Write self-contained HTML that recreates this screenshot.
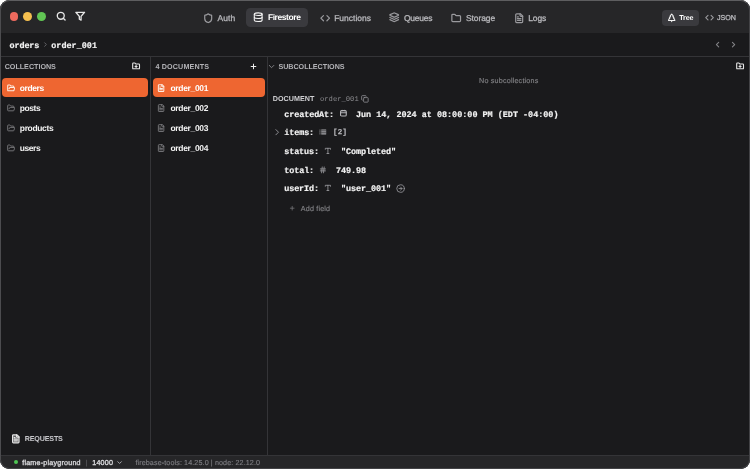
<!DOCTYPE html>
<html><head><meta charset="utf-8">
<style>
*{margin:0;padding:0;box-sizing:border-box}
html,body{width:750px;height:469px;overflow:hidden;background:#fff}
body{position:relative}
#win{position:absolute;left:0;top:0;width:750px;height:469px;background:#1a1a1c;border-radius:9.500px;overflow:hidden;will-change:transform}
#frame{position:absolute;left:0;top:0;width:750px;height:469px;border-style:solid;border-width:1px 1.300px 1.300px 0.700px;border-color:#5e5e60 #434346 #434346 #4c4c4f;border-radius:9.500px;z-index:10}
.abs{position:absolute}
.t{position:absolute;white-space:pre;line-height:1;text-rendering:geometricPrecision}
.s{font-family:"Liberation Sans",sans-serif}
.m{font-family:"Liberation Mono",monospace}
svg{position:absolute;overflow:visible;fill:none;stroke-linecap:round;stroke-linejoin:round}
.tabi{stroke:#9a9a9e;stroke-width:2.800}
.gi{stroke:#808084;stroke-width:2.500}
</style></head><body>
<div id="win">
  <!-- title bar -->
  <div class="abs" style="left:0;top:0;width:750px;height:33px;background:#262628"></div>
  <div class="abs" style="left:9.500px;top:12.200px;width:8.800px;height:8.800px;border-radius:50%;background:#ed6a5e"></div>
  <div class="abs" style="left:23px;top:12.100px;width:9px;height:9px;border-radius:50%;background:#f5bf4f"></div>
  <div class="abs" style="left:36.500px;top:12.100px;width:9px;height:9px;border-radius:50%;background:#61c554"></div>
  <svg style="left:55.500px;top:11px" width="10.400" height="10.400" viewBox="0 0 24 24" stroke="#e6e6e6" stroke-width="3.100"><circle cx="11" cy="11" r="8"/><path d="m21 21-4.300-4.300"/></svg>
  <svg style="left:74.700px;top:11.200px" width="10.400" height="10.400" viewBox="0 0 24 24" stroke="#e6e6e6" stroke-width="3.100"><polygon points="22 3 2 3 10 12.460 10 19 14 21 14 12.460 22 3"/></svg>

  <!-- tabs -->
  <svg class="tabi" style="left:202.800px;top:12.700px" width="10.400" height="10.400" viewBox="0 0 24 24"><path d="M20 13c0 5-3.500 7.500-7.660 8.950a1 1 0 0 1-.670-.010C7.500 20.500 4 18 4 13V6a1 1 0 0 1 1-1c2 0 4.500-1.200 6.240-2.720a1.170 1.170 0 0 1 1.520 0C14.510 3.810 17 5 19 5a1 1 0 0 1 1 1z"/></svg>
  <div class="abs" style="left:246.300px;top:8px;width:62px;height:19.300px;border-radius:4.500px;background:#3a3a3e"></div>
  <svg style="left:253px;top:12.400px" width="10.400" height="10.400" viewBox="0 0 24 24" stroke="#f4f4f4" stroke-width="2.500"><ellipse cx="12" cy="5" rx="9" ry="3"/><path d="M3 5V19A9 3 0 0 0 21 19V5"/><path d="M3 12A9 3 0 0 0 21 12"/></svg>
  <svg class="tabi" style="left:319.500px;top:12.600px" width="10.400" height="10.400" viewBox="0 0 24 24"><polyline points="16 18 22 12 16 6"/><polyline points="8 6 2 12 8 18"/></svg>
  <svg class="tabi" style="left:389.400px;top:12.400px" width="10.400" height="10.400" viewBox="0 0 24 24"><path d="m12.830 2.180a2 2 0 0 0-1.660 0L2.600 6.080a1 1 0 0 0 0 1.830l8.580 3.910a2 2 0 0 0 1.660 0l8.580-3.900a1 1 0 0 0 0-1.830Z"/><path d="m22 17.650-9.170 4.160a2 2 0 0 1-1.660 0L2 17.650"/><path d="m22 12.650-9.170 4.160a2 2 0 0 1-1.660 0L2 12.650"/></svg>
  <svg class="tabi" style="left:451.400px;top:12.500px" width="10.400" height="10.400" viewBox="0 0 24 24"><path d="M20 20a2 2 0 0 0 2-2V8a2 2 0 0 0-2-2h-7.900a2 2 0 0 1-1.690-.9L9.600 3.900A2 2 0 0 0 7.930 3H4a2 2 0 0 0-2 2v13a2 2 0 0 0 2 2Z"/></svg>
  <svg class="tabi" style="left:514px;top:12.500px" width="10.400" height="10.400" viewBox="0 0 24 24"><path d="M15 2H6a2 2 0 0 0-2 2v16a2 2 0 0 0 2 2h12a2 2 0 0 0 2-2V7Z"/><path d="M14 2v4a2 2 0 0 0 2 2h4"/><path d="M10 9H8"/><path d="M16 13H8"/><path d="M16 17H8"/></svg>

  <div class="abs" style="left:662.300px;top:9.600px;width:36.500px;height:16.500px;border-radius:4px;background:#3a3a3e"></div>
  <svg style="left:667.200px;top:13px" width="9.400" height="9.400" viewBox="0 0 24 24" stroke="#f4f4f4" stroke-width="2.700"><path d="m17 14 3 3.300a1 1 0 0 1-.7 1.700H4.700a1 1 0 0 1-.7-1.700L7 14h-.3a1 1 0 0 1-.7-1.700L9 9h-.2A1 1 0 0 1 8 7.300L12 3l4 4.300a1 1 0 0 1-.8 1.700H15l3 3.300a1 1 0 0 1-.7 1.700H17Z"/><path d="M12 22v-3"/></svg>
  <svg class="tabi" style="left:705.400px;top:13.100px" width="9.100" height="9.100" viewBox="0 0 24 24"><polyline points="16 18 22 12 16 6"/><polyline points="8 6 2 12 8 18"/></svg>

  <!-- breadcrumb -->
  <svg style="left:42px;top:41.300px" width="7" height="7" viewBox="0 0 24 24" stroke="#6c6c70" stroke-width="3"><path d="m9 18 6-6-6-6"/></svg>
  <svg style="left:712.700px;top:40.200px" width="9.100" height="9.100" viewBox="0 0 24 24" stroke="#848488" stroke-width="2.800"><path d="m15 18-6-6 6-6"/></svg>
  <svg style="left:728.800px;top:40.200px" width="9.100" height="9.100" viewBox="0 0 24 24" stroke="#848488" stroke-width="2.800"><path d="m9 18 6-6-6-6"/></svg>
  <div class="abs" style="left:0;top:56px;width:750px;height:1px;background:#343437"></div>

  <!-- column dividers -->
  <div class="abs" style="left:150px;top:57px;width:1px;height:399px;background:#343437"></div>
  <div class="abs" style="left:267px;top:57px;width:1px;height:399px;background:#343437"></div>

  <!-- collections -->
  <svg style="left:131.800px;top:62.200px" width="8.200" height="8.200" viewBox="0 0 24 24" stroke="#e6e6e6" stroke-width="3.200"><path d="M12 10v6"/><path d="M9 13h6"/><path d="M20 20a2 2 0 0 0 2-2V8a2 2 0 0 0-2-2h-7.900a2 2 0 0 1-1.690-.9L9.600 3.900A2 2 0 0 0 7.930 3H4a2 2 0 0 0-2 2v13a2 2 0 0 0 2 2Z"/></svg>
  <div class="abs" style="left:2px;top:77.900px;width:146.200px;height:19.300px;border-radius:4px;background:#ee6631"></div>
  <svg style="left:6.900px;top:83.800px" width="8.200" height="8.200" viewBox="0 0 24 24" stroke="#ffeee4" stroke-width="3"><path d="m6 14 1.500-2.900A2 2 0 0 1 9.240 10H20a2 2 0 0 1 1.940 2.500l-1.540 6a2 2 0 0 1-1.950 1.500H4a2 2 0 0 1-2-2V5a2 2 0 0 1 2-2h3.900a2 2 0 0 1 1.690.9l.810 1.200a2 2 0 0 0 1.670.9H18a2 2 0 0 1 2 2v2"/></svg>
  <svg class="gi" style="left:6.900px;top:103.800px" width="8.200" height="8.200" viewBox="0 0 24 24"><path d="m6 14 1.500-2.900A2 2 0 0 1 9.240 10H20a2 2 0 0 1 1.940 2.500l-1.540 6a2 2 0 0 1-1.950 1.500H4a2 2 0 0 1-2-2V5a2 2 0 0 1 2-2h3.900a2 2 0 0 1 1.690.9l.810 1.200a2 2 0 0 0 1.670.9H18a2 2 0 0 1 2 2v2"/></svg>
  <svg class="gi" style="left:6.900px;top:123.800px" width="8.200" height="8.200" viewBox="0 0 24 24"><path d="m6 14 1.500-2.900A2 2 0 0 1 9.240 10H20a2 2 0 0 1 1.940 2.500l-1.540 6a2 2 0 0 1-1.950 1.500H4a2 2 0 0 1-2-2V5a2 2 0 0 1 2-2h3.900a2 2 0 0 1 1.690.9l.810 1.200a2 2 0 0 0 1.670.9H18a2 2 0 0 1 2 2v2"/></svg>
  <svg class="gi" style="left:6.900px;top:143.800px" width="8.200" height="8.200" viewBox="0 0 24 24"><path d="m6 14 1.500-2.900A2 2 0 0 1 9.240 10H20a2 2 0 0 1 1.940 2.500l-1.540 6a2 2 0 0 1-1.950 1.500H4a2 2 0 0 1-2-2V5a2 2 0 0 1 2-2h3.900a2 2 0 0 1 1.690.9l.810 1.200a2 2 0 0 0 1.670.9H18a2 2 0 0 1 2 2v2"/></svg>

  <!-- documents -->
  <svg style="left:249.800px;top:62.900px" width="7" height="7" viewBox="0 0 24 24" stroke="#f0f0f0" stroke-width="3.400"><path d="M4 12h16"/><path d="M12 4v16"/></svg>
  <div class="abs" style="left:152.600px;top:77.900px;width:112.800px;height:19.300px;border-radius:4px;background:#ee6631"></div>
  <svg style="left:157.400px;top:83.900px" width="8.200" height="8.200" viewBox="0 0 24 24" stroke="#ffeee4" stroke-width="3"><path d="M15 2H6a2 2 0 0 0-2 2v16a2 2 0 0 0 2 2h12a2 2 0 0 0 2-2V7Z"/><path d="M14 2v4a2 2 0 0 0 2 2h4"/><path d="M10 9H8"/><path d="M16 13H8"/><path d="M16 17H8"/></svg>
  <svg class="gi" style="left:157.400px;top:103.900px" width="8.200" height="8.200" viewBox="0 0 24 24"><path d="M15 2H6a2 2 0 0 0-2 2v16a2 2 0 0 0 2 2h12a2 2 0 0 0 2-2V7Z"/><path d="M14 2v4a2 2 0 0 0 2 2h4"/><path d="M10 9H8"/><path d="M16 13H8"/><path d="M16 17H8"/></svg>
  <svg class="gi" style="left:157.400px;top:123.900px" width="8.200" height="8.200" viewBox="0 0 24 24"><path d="M15 2H6a2 2 0 0 0-2 2v16a2 2 0 0 0 2 2h12a2 2 0 0 0 2-2V7Z"/><path d="M14 2v4a2 2 0 0 0 2 2h4"/><path d="M10 9H8"/><path d="M16 13H8"/><path d="M16 17H8"/></svg>
  <svg class="gi" style="left:157.400px;top:143.900px" width="8.200" height="8.200" viewBox="0 0 24 24"><path d="M15 2H6a2 2 0 0 0-2 2v16a2 2 0 0 0 2 2h12a2 2 0 0 0 2-2V7Z"/><path d="M14 2v4a2 2 0 0 0 2 2h4"/><path d="M10 9H8"/><path d="M16 13H8"/><path d="M16 17H8"/></svg>

  <!-- right panel -->
  <svg style="left:267.250px;top:61.950px" width="9.100" height="9.100" viewBox="0 0 24 24" stroke="#8a8a8e" stroke-width="2.400"><path d="m6 9 6 6 6-6"/></svg>
  <svg style="left:736.400px;top:62.200px" width="8.200" height="8.200" viewBox="0 0 24 24" stroke="#e6e6e6" stroke-width="3.200"><path d="M12 10v6"/><path d="M9 13h6"/><path d="M20 20a2 2 0 0 0 2-2V8a2 2 0 0 0-2-2h-7.900a2 2 0 0 1-1.690-.9L9.600 3.900A2 2 0 0 0 7.930 3H4a2 2 0 0 0-2 2v13a2 2 0 0 0 2 2Z"/></svg>
  <svg style="left:360.900px;top:94.700px" width="7.800" height="7.800" viewBox="0 0 24 24" stroke="#8a8a8e" stroke-width="2.600"><rect width="14" height="14" x="8" y="8" rx="2" ry="2"/><path d="M4 16c-1.100 0-2-.9-2-2V4c0-1.100.9-2 2-2h10c1.100 0 2 .9 2 2"/></svg>
  <svg style="left:340.100px;top:110.200px" width="6.800" height="6.600" viewBox="0 0 6.800 6.600" stroke="#b4b4b8" stroke-width="1.100"><rect x="0.550" y="0.650" width="5.700" height="5.400" rx="1.100"/><path d="M0.600 2.700h5.600"/><path d="M2.100 0.200v0.600"/><path d="M4.700 0.200v0.600"/></svg>
  <svg style="left:271.900px;top:127.100px" width="10.400" height="10.400" viewBox="0 0 24 24" stroke="#8e8e92" stroke-width="2.300"><path d="m9 18 6-6-6-6"/></svg>
  <svg style="left:319px;top:128.400px" width="7.800" height="7.800" viewBox="0 0 24 24" stroke="#aaaaae" stroke-width="3.300"><path d="M3 12h.010"/><path d="M3 18h.010"/><path d="M3 6h.010"/><path d="M8 12h13"/><path d="M8 18h13"/><path d="M8 6h13"/></svg>
  <svg style="left:324.300px;top:147.100px" width="7.800" height="7.800" viewBox="0 0 24 24" stroke="#a4a4a8" stroke-width="2.400"><polyline points="4 7 4 4 20 4 20 7"/><line x1="9" x2="15" y1="20" y2="20"/><line x1="12" x2="12" y1="4" y2="20"/></svg>
  <svg style="left:319.400px;top:165.800px" width="7.800" height="7.800" viewBox="0 0 24 24" stroke="#a4a4a8" stroke-width="2.400"><line x1="4" x2="20" y1="9" y2="9"/><line x1="4" x2="20" y1="15" y2="15"/><line x1="10" x2="8" y1="3" y2="21"/><line x1="16" x2="14" y1="3" y2="21"/></svg>
  <svg style="left:324.300px;top:183.900px" width="7.800" height="7.800" viewBox="0 0 24 24" stroke="#a4a4a8" stroke-width="2.400"><polyline points="4 7 4 4 20 4 20 7"/><line x1="9" x2="15" y1="20" y2="20"/><line x1="12" x2="12" y1="4" y2="20"/></svg>
  <svg style="left:396.100px;top:183.500px" width="9.100" height="9.100" viewBox="0 0 24 24" stroke="#98989c" stroke-width="2.200"><circle cx="12" cy="12" r="10"/><path d="M8 12h8"/><path d="m12 16 4-4-4-4"/></svg>
  <svg style="left:289.300px;top:205.200px" width="6.400" height="6.400" viewBox="0 0 24 24" stroke="#7a7a7e" stroke-width="2.800"><path d="M5 12h14"/><path d="M12 5v14"/></svg>

  <!-- requests -->
  <svg style="left:11.100px;top:433.700px" width="9.600" height="9.600" viewBox="0 0 24 24" stroke="#e4e4e4" stroke-width="3"><path d="M15 2H6a2 2 0 0 0-2 2v16a2 2 0 0 0 2 2h12a2 2 0 0 0 2-2V7Z" fill="rgba(255,255,255,0.3)"/><path d="M14 2v4a2 2 0 0 0 2 2h4"/><path d="M10 9H8"/><path d="M16 13H8"/><path d="M16 17H8"/></svg>

  <!-- status bar -->
  <div class="abs" style="left:0;top:455px;width:750px;height:1px;background:#343437"></div>
  <div class="abs" style="left:0;top:456px;width:750px;height:13px;background:#262628"></div>
  <div class="abs" style="left:14px;top:460.300px;width:4.200px;height:4.200px;border-radius:50%;background:#4ec653"></div>
  <svg style="left:116.400px;top:458.700px" width="7.200" height="7.200" viewBox="0 0 24 24" stroke="#b4b4b8" stroke-width="3"><path d="m6 9 6 6 6-6"/></svg>
<span class="t s" style="left:217.60px;top:14px;font-size:8.46px;color:#b6b6ba;letter-spacing:0.036px;-webkit-text-stroke:0.3px #b6b6ba">Auth</span>
<span class="t s" style="left:267.90px;top:13px;font-size:8.46px;color:#ffffff;letter-spacing:-0.398px;font-weight:bold">Firestore</span>
<span class="t s" style="left:334.20px;top:14px;font-size:8.46px;color:#b6b6ba;letter-spacing:0.018px;-webkit-text-stroke:0.3px #b6b6ba">Functions</span>
<span class="t s" style="left:404.00px;top:14px;font-size:8.46px;color:#b6b6ba;letter-spacing:-0.202px;-webkit-text-stroke:0.3px #b6b6ba">Queues</span>
<span class="t s" style="left:465.90px;top:14px;font-size:8.46px;color:#b6b6ba;letter-spacing:-0.052px;-webkit-text-stroke:0.3px #b6b6ba">Storage</span>
<span class="t s" style="left:528.30px;top:14px;font-size:8.46px;color:#b6b6ba;letter-spacing:-0.148px;-webkit-text-stroke:0.3px #b6b6ba">Logs</span>
<span class="t s" style="left:679.20px;top:15px;font-size:7.16px;color:#ffffff;letter-spacing:-0.145px;font-weight:bold">Tree</span>
<span class="t s" style="left:717.00px;top:15px;font-size:7.16px;color:#b6b6ba;letter-spacing:-0.031px;-webkit-text-stroke:0.3px #b6b6ba">JSON</span>
<span class="t m" style="left:9.50px;top:42px;font-size:8.46px;color:#f3f3f3;letter-spacing:-0.108px;font-weight:bold;-webkit-text-stroke:0.18px #f3f3f3">orders</span>
<span class="t m" style="left:51.30px;top:42px;font-size:8.46px;color:#f3f3f3;letter-spacing:0.005px;font-weight:bold;-webkit-text-stroke:0.18px #f3f3f3">order_001</span>
<span class="t s" style="left:4.70px;top:64px;font-size:7.16px;color:#b2b2b6;letter-spacing:-0.010px;font-weight:bold">COLLECTIONS</span>
<span class="t s" style="left:19.80px;top:84px;font-size:8.46px;color:#ffffff;letter-spacing:-0.382px;font-weight:bold">orders</span>
<span class="t s" style="left:19.80px;top:104px;font-size:8.46px;color:#f3f3f3;letter-spacing:-0.412px;font-weight:bold">posts</span>
<span class="t s" style="left:19.80px;top:124px;font-size:8.46px;color:#f3f3f3;letter-spacing:-0.325px;font-weight:bold">products</span>
<span class="t s" style="left:19.80px;top:144px;font-size:8.46px;color:#f3f3f3;letter-spacing:-0.441px;font-weight:bold">users</span>
<span class="t s" style="left:155.60px;top:64px;font-size:7.16px;color:#b2b2b6;letter-spacing:0.131px;font-weight:bold">4 DOCUMENTS</span>
<span class="t s" style="left:170.50px;top:84px;font-size:8.46px;color:#ffffff;letter-spacing:-0.315px;font-weight:bold">order_001</span>
<span class="t s" style="left:170.50px;top:104px;font-size:8.46px;color:#f3f3f3;letter-spacing:-0.315px;font-weight:bold">order_002</span>
<span class="t s" style="left:170.50px;top:124px;font-size:8.46px;color:#f3f3f3;letter-spacing:-0.315px;font-weight:bold">order_003</span>
<span class="t s" style="left:170.50px;top:144px;font-size:8.46px;color:#f3f3f3;letter-spacing:-0.315px;font-weight:bold">order_004</span>
<span class="t s" style="left:278.40px;top:64px;font-size:7.16px;color:#b2b2b6;letter-spacing:-0.016px;font-weight:bold">SUBCOLLECTIONS</span>
<span class="t s" style="left:479.10px;top:78px;font-size:7.16px;color:#808084;letter-spacing:0.194px;-webkit-text-stroke:0.15px #808084">No subcollections</span>
<span class="t s" style="left:272.70px;top:96px;font-size:7.16px;color:#cfcfd2;letter-spacing:0.063px;font-weight:bold">DOCUMENT</span>
<span class="t m" style="left:320.00px;top:97px;font-size:7.16px;color:#88888c;letter-spacing:0.005px">order_001</span>
<span class="t m" style="left:284.20px;top:111px;font-size:8.46px;color:#f3f3f3;letter-spacing:-0.082px;font-weight:bold;-webkit-text-stroke:0.18px #f3f3f3">createdAt:</span>
<span class="t m" style="left:355.90px;top:111px;font-size:8.46px;color:#f3f3f3;letter-spacing:-0.008px;font-weight:bold;-webkit-text-stroke:0.18px #f3f3f3">Jun 14, 2024 at 08:00:00 PM (EDT -04:00)</span>
<span class="t m" style="left:284.20px;top:129px;font-size:8.46px;color:#f3f3f3;letter-spacing:-0.087px;font-weight:bold;-webkit-text-stroke:0.18px #f3f3f3">items:</span>
<span class="t m" style="left:333.00px;top:130px;font-size:7.4px;color:#c2c2c6;letter-spacing:0.294px;-webkit-text-stroke:0.3px #c2c2c6">[2]</span>
<span class="t m" style="left:284.20px;top:148px;font-size:8.46px;color:#f3f3f3;letter-spacing:-0.103px;font-weight:bold;-webkit-text-stroke:0.18px #f3f3f3">status:</span>
<span class="t m" style="left:341.00px;top:148px;font-size:8.46px;color:#f3f3f3;letter-spacing:-0.061px;font-weight:bold;-webkit-text-stroke:0.18px #f3f3f3">&quot;Completed&quot;</span>
<span class="t m" style="left:284.20px;top:167px;font-size:8.46px;color:#f3f3f3;letter-spacing:-0.087px;font-weight:bold;-webkit-text-stroke:0.18px #f3f3f3">total:</span>
<span class="t m" style="left:335.90px;top:167px;font-size:8.46px;color:#f3f3f3;letter-spacing:-0.067px;font-weight:bold;-webkit-text-stroke:0.18px #f3f3f3">749.98</span>
<span class="t m" style="left:284.20px;top:185px;font-size:8.46px;color:#f3f3f3;letter-spacing:-0.103px;font-weight:bold;-webkit-text-stroke:0.18px #f3f3f3">userId:</span>
<span class="t m" style="left:341.00px;top:185px;font-size:8.46px;color:#f3f3f3;letter-spacing:-0.082px;font-weight:bold;-webkit-text-stroke:0.18px #f3f3f3">&quot;user_001&quot;</span>
<span class="t s" style="left:300.80px;top:206px;font-size:7.16px;color:#808084;letter-spacing:0.180px;-webkit-text-stroke:0.15px #808084">Add field</span>
<span class="t s" style="left:24.80px;top:436px;font-size:7.16px;color:#c6c6ca;letter-spacing:-0.182px;font-weight:bold">REQUESTS</span>
<span class="t s" style="left:22.20px;top:460px;font-size:7.16px;color:#d6d6d9;letter-spacing:0.207px;-webkit-text-stroke:0.35px #d6d6d9">flame-playground</span>
<span class="t s" style="left:85.60px;top:460px;font-size:7.16px;color:#66666a;letter-spacing:0.000px">|</span>
<span class="t s" style="left:92.20px;top:460px;font-size:7.16px;color:#d6d6d9;letter-spacing:0.223px;-webkit-text-stroke:0.35px #d6d6d9">14000</span>
<span class="t s" style="left:135.40px;top:460px;font-size:7.16px;color:#7c7c80;letter-spacing:0.110px;-webkit-text-stroke:0.15px #7c7c80">firebase-tools: 14.25.0 | node: 22.12.0</span>
</div>
<div id="frame"></div>
</body></html>
